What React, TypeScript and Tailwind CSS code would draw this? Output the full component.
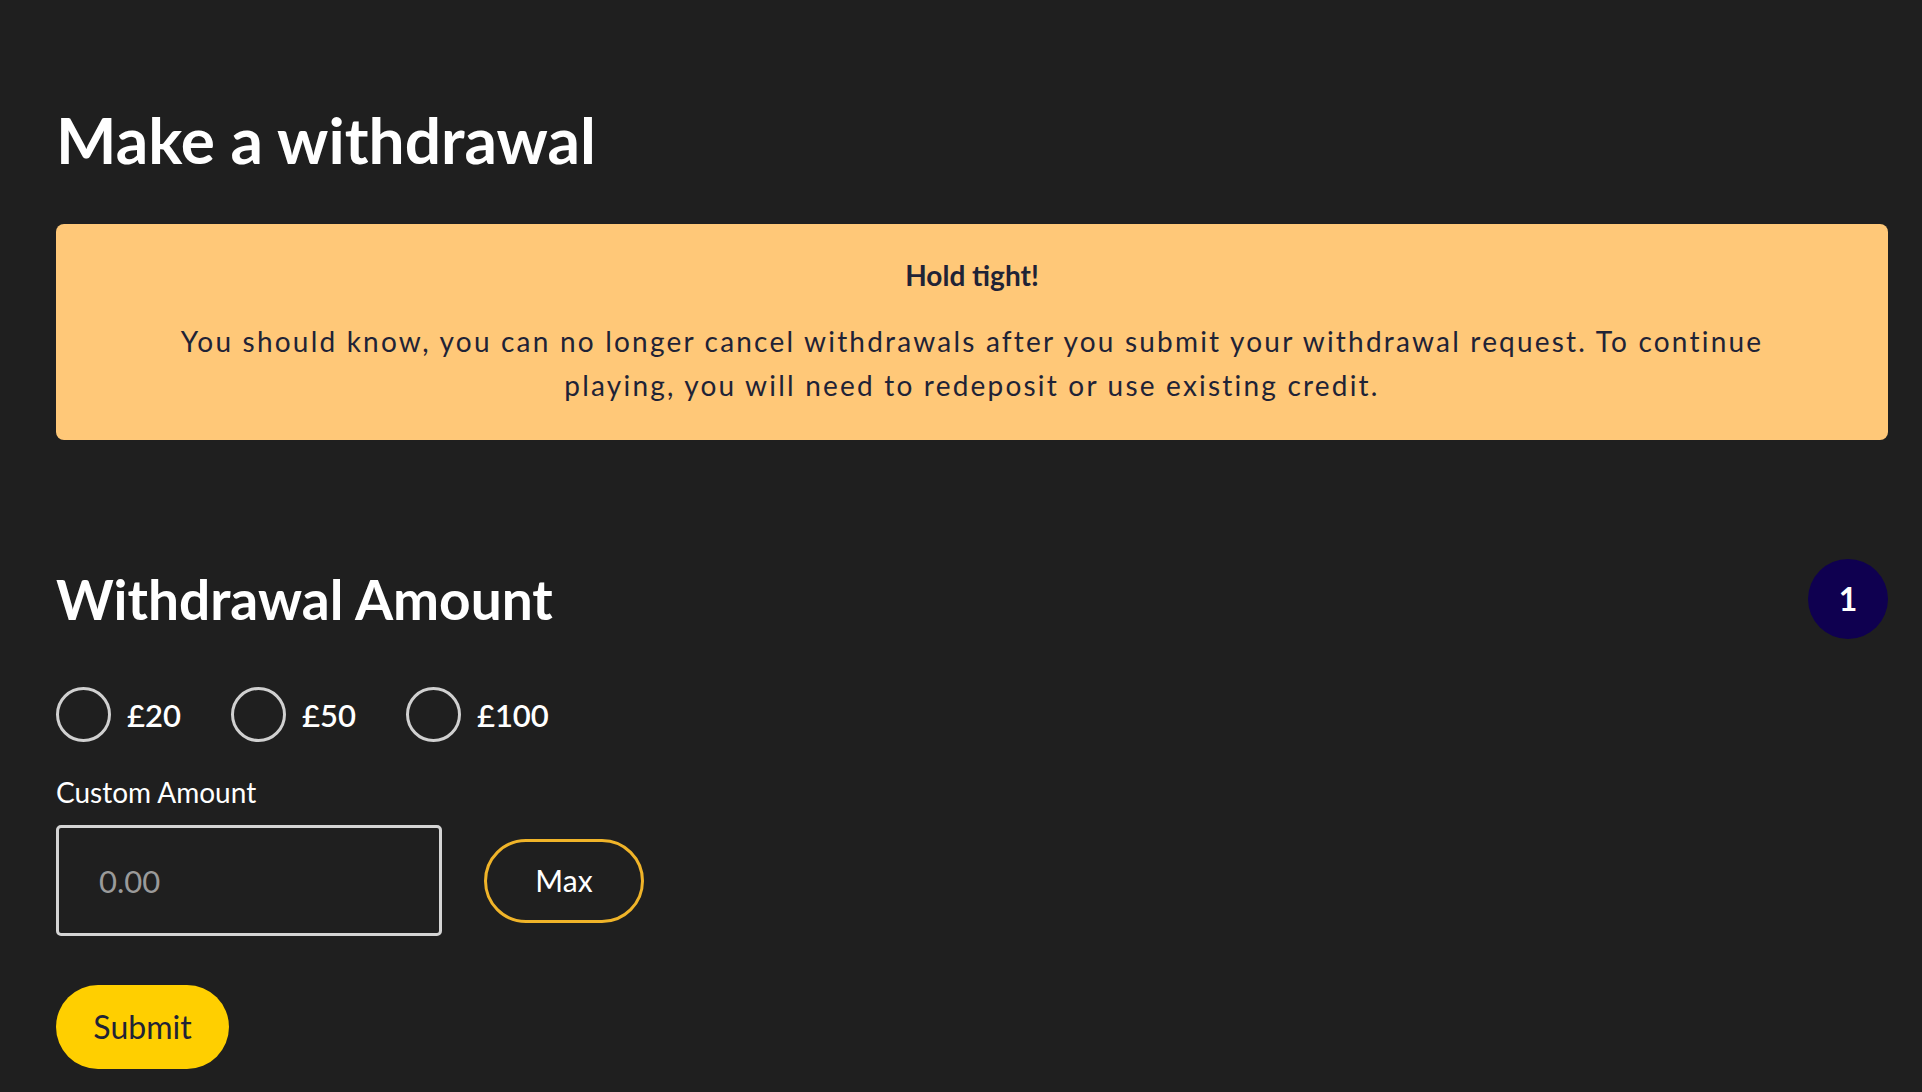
import React from 'react';

const amounts = ['£20', '£50', '£100'];

const App: React.FC = () => {
  return (
    <div className="min-h-screen bg-[#1f1f1f] pl-[56px] pr-[34px] pt-[108px] pb-[23px] font-['Lato',sans-serif] text-white">
      <h1 className="text-[64px] leading-[64px] font-bold">Make a withdrawal</h1>

      <div className="mt-[52px] rounded-lg bg-[#ffc878] px-[96px] pt-[33px] pb-[33px] text-center text-[#1f2336]">
        <p className="text-[28px] leading-[36px] font-bold">Hold tight!</p>
        <p className="mt-[26px] text-[28px] leading-[44px] tracking-[2.2px]">
          You should know, you can no longer cancel withdrawals after you submit your withdrawal request. To continue
          playing, you will need to redeposit or use existing credit.
        </p>
      </div>

      <section className="mt-[119px]">
        <div className="flex items-center justify-between">
          <h2 className="text-[55px] leading-[64px] font-bold">Withdrawal Amount</h2>
          <div className="flex h-20 w-20 items-center justify-center rounded-full bg-[#0f0050] text-[32px] font-bold">1</div>
        </div>

        <div className="mt-[48px] flex items-center gap-[50px]">
          {amounts.map((a) => (
            <label key={a} className="flex items-center gap-[16px] cursor-pointer">
              <span className="h-[55px] w-[55px] rounded-full border-[3px] border-[#d0d0d0]" />
              <span className="text-[31px] leading-[40px] font-semibold">{a}</span>
            </label>
          ))}
        </div>

        <p className="mt-[34px] text-[28px] leading-[32px]">Custom Amount</p>

        <div className="mt-[17px] flex items-center gap-[42px]">
          <input
            type="text"
            placeholder="0.00"
            className="h-[111px] w-[386px] rounded-[5px] border-[3px] border-[#d4d4d4] bg-transparent pl-[40px] text-[31px] text-white placeholder:text-[#9a9a9a] outline-none"
          />
          <button className="h-[84px] w-[160px] rounded-full border-[3px] border-[#f0b429] text-[30px] text-white">Max</button>
        </div>

        <button className="mt-[49px] h-[84px] w-[173px] rounded-full bg-[#ffcf00] text-[32px] text-[#1f2336]">Submit</button>
      </section>
    </div>
  );
};

export default App;
